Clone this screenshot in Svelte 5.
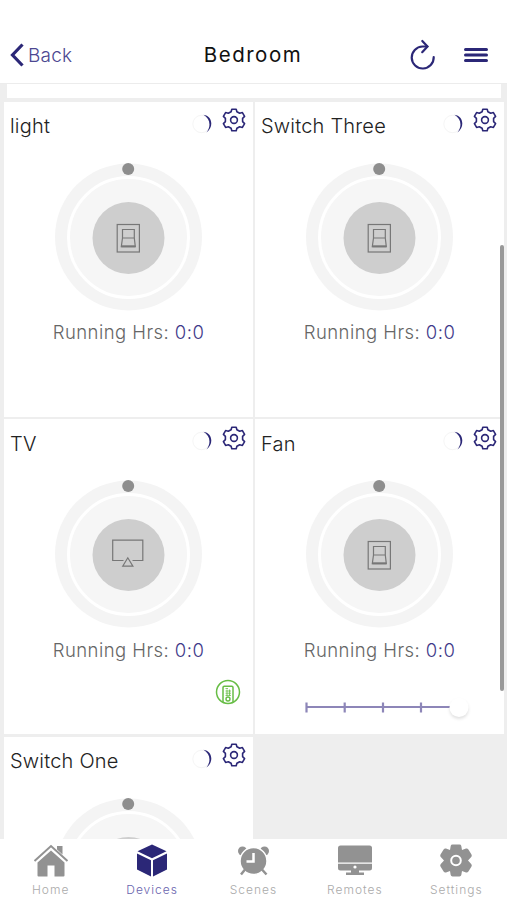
<script>
  let devices = $state([
    { name: 'light', type: 'switch', hours: '0:0' },
    { name: 'Switch Three', type: 'switch', hours: '0:0' },
    { name: 'TV', type: 'tv', hours: '0:0', remote: true },
    { name: 'Fan', type: 'switch', hours: '0:0', slider: true },
    { name: 'Switch One', type: 'switch' },
  ]);

  const tabs = ['Home', 'Devices', 'Scenes', 'Remotes', 'Settings'];
  let active = $state('Devices');
</script>

{#snippet gear()}
  <svg class="gear" viewBox="0 0 24 24" width="24" height="24">
    <path
      d="M9.100 3.700L9.800 1.200H14.200L14.900 3.700L17.700 5.300L20.400 4.600L22.600 8.400L20.600 10.400V13.600L22.600 15.600L20.400 19.400L17.700 18.700L14.900 20.300L14.200 22.800H9.800L9.100 20.300L6.300 18.700L3.600 19.400L1.400 15.600L3.400 13.600V10.400L1.400 8.400L3.600 4.600L6.300 5.300Z"
    />
    <circle cx="12" cy="12" r="3.400" />
  </svg>
{/snippet}

{#snippet dial(type)}
  <svg class="dial" viewBox="0.500 0 149 150" width="149" height="150">
    <circle cx="75" cy="75" r="73.500" fill="#f4f4f4" />
    <circle cx="75" cy="75.500" r="60" fill="#f6f6f6" stroke="#fff" stroke-width="3" />
    <circle cx="75" cy="76" r="36" fill="#cecece" />
    <circle cx="74.700" cy="7" r="6" fill="#8e8e8e" />
    {#if type === 'tv'}
      <g fill="none" stroke="#777" stroke-width="1.200">
        <path d="M70 81.500H59.200V61.200H89.300V81.500H79" />
        <path d="M69.200 87.200L74.300 78.800L79.400 87.200Z" />
      </g>
    {:else}
      <g fill="none" stroke="#777" stroke-width="1.200">
        <rect x="63.700" y="62.500" width="22.200" height="27.500" />
        <path d="M69 67.500H80.800V76H69ZM69 76L67.800 84.700H81.800L80.800 76" />
        <path d="M67.800 84.300H81.800" stroke-width="2" />
      </g>
    {/if}
  </svg>
{/snippet}

<div class="screen">
  <header>
    <button class="back">
      <svg viewBox="0 0 16 24" width="16" height="24">
        <path d="M13.500 1.500L3.500 12L13.500 22.500" />
      </svg>
      <span>Back</span>
    </button>
    <h1>Bedroom</h1>
    <div class="actions">
      <svg class="refresh" viewBox="0 0 28 32" width="28" height="32">
        <path d="M24.700 18.100A11 11 0 1 1 13.500 7.500H18.200" />
        <path d="M13.300 2L18.500 7.500L13.200 13.200" />
      </svg>
      <svg class="menu" viewBox="0 0 24 16" width="24" height="16">
        <path d="M1.500 2.500H22.500M1.500 8H22.500M1.500 13.500H22.500" />
      </svg>
    </div>
  </header>

  <main>
    <div class="previous"></div>
    <div class="grid">
      {#each devices as device}
        <section class="card">
          <div class="card-head">
            <h2>{device.name}</h2>
            <svg class="moon" viewBox="0 0 20 20" width="20" height="20">
              <circle cx="9.500" cy="10" r="8.700" fill="none" stroke="#f5f5f5" />
              <path d="M11.500 .8C20.500 2 22 13 14.500 18.500C19.500 12 18 4.500 11.500 .8Z" fill="#2b2777" />
            </svg>
            {@render gear()}
          </div>
          {@render dial(device.type)}
          {#if device.hours}
            <p class="hours">Running Hrs: <span>{device.hours}</span></p>
          {/if}
          {#if device.remote}
            <svg class="remote" viewBox="0 0 26 26" width="26" height="26">
              <circle cx="13" cy="13" r="11.500" stroke-width="1.500" />
              <path d="M8 23V8.500Q8 7.300 9.200 7.300H16.800Q18 7.300 18 8.500V23" stroke-width="1.500" />
              <path d="M10.500 9.500H13M10.500 12H16M10.500 14.200H16M10.500 16.400H16M12 10.500V17M14.500 10.500V17" stroke-width=".8" />
              <circle cx="13" cy="20" r="2" stroke-width="1.400" />
            </svg>
          {/if}
          {#if device.slider}
            <svg class="slider" viewBox="0 0 170 28" width="170" height="28">
              <path d="M2 12H148" />
              <path d="M2.500 7.500V17.500M40.700 7.500V17.500M79 7.500V17.500M117 7.500V17.500" />
              <circle class="knob" cx="155" cy="12.500" r="9.500" />
            </svg>
          {/if}
        </section>
      {/each}
    </div>
    <div class="scrollbar"></div>
  </main>

  <nav>
    {#each tabs as tab}
      <button class="tab" class:active={tab === active} onclick={() => (active = tab)}>
        <svg viewBox="0 0 36 34" width="36" height="34">
          {#if tab === 'Home'}
            <path d="M4.500 18.500L18 6.500L31.500 18.500V31.500Q31.500 32.500 30.500 32.500H21.500V21.500H14.500V32.500H5.500Q4.500 32.500 4.500 31.500Z" />
            <path d="M1.500 17L18 2L34.500 17" fill="none" stroke="currentColor" stroke-width="2" />
            <path d="M24 2H29.500V10.500L24 5.500Z" />
          {:else if tab === 'Devices'}
            <path d="M18 .5L32.500 7.300L18 14.300L3.500 7.300Z" />
            <path d="M3 9.500L17 16.200V32.500L3 25.500Z" />
            <path d="M33 9.500L19 16.200V32.500L33 25.500Z" />
          {:else if tab === 'Scenes'}
            <circle cx="7.500" cy="7" r="4.500" />
            <circle cx="29.500" cy="7" r="4.500" />
            <circle cx="18.500" cy="17" r="13.500" stroke="#fff" stroke-width="1.500" />
            <path d="M10 25.500L6 30.500M27 25.500L31.500 30.500" stroke="currentColor" stroke-width="2.500" />
            <path d="M18.500 9V17.500H11.500" fill="none" stroke="#fff" stroke-width="2.500" />
          {:else if tab === 'Remotes'}
            <path d="M3.500 1.500H32.500Q35 1.500 35 4V18.500H1V4Q1 1.500 3.500 1.500Z" />
            <path d="M1 19.700H35V24Q35 26.500 32.500 26.500H22V28.500H27V31H9V28.500H14V26.500H3.500Q1 26.500 1 24Z" />
            <circle cx="18" cy="23" r="1.600" fill="#fff" />
          {:else}
            <path
              d="M14.500 .6H21.500Q23 .6 23.300 2L24 6L28 4.600Q29.500 4.200 30.400 5.500L33.500 10.500Q34.300 12 33.200 13L30 16.500L33.200 20Q34.300 21 33.500 22.500L30.400 27.500Q29.500 28.800 28 28.400L24 27L23.300 31Q23 32.400 21.500 32.400H14.500Q13 32.400 12.700 31L12 27L8 28.400Q6.500 28.800 5.600 27.500L2.500 22.500Q1.700 21 2.800 20L6 16.500L2.800 13Q1.700 12 2.500 10.500L5.600 5.500Q6.500 4.200 8 4.600L12 6L12.700 2Q13 .6 14.500 .6Z"
            />
            <circle cx="18" cy="16.500" r="4.800" fill="none" stroke="#fff" stroke-width="2" />
          {/if}
        </svg>
        <span>{tab}</span>
      </button>
    {/each}
  </nav>
</div>

<style>
  .screen {
    display: flex;
    flex-direction: column;
    width: 507px;
    height: 900px;
    overflow: hidden;
    background: #fff;
    font-family: Inter, 'Liberation Sans', sans-serif;
    font-weight: 300;
    color: #222;
  }

  button {
    border: 0;
    padding: 0;
    background: none;
    font: inherit;
    color: inherit;
  }

  header {
    flex: none;
    display: grid;
    grid-template-columns: 1fr auto 1fr;
    align-items: center;
    height: 84px;
    padding: 27px 19px 0 9px;
    box-sizing: border-box;
    border-bottom: 1px solid #ececec;
  }

  .back {
    display: flex;
    align-items: center;
    gap: 3px;
    font-size: 19px;
    letter-spacing: 0.2px;
    color: #4c4791;
  }

  .back span {
    padding-top: 1px;
  }

  .back svg {
    fill: none;
    stroke: #2b2777;
    stroke-width: 3.2;
  }

  h1 {
    margin: 0 0 1px 9px;
    font-size: 20.5px;
    font-weight: 400;
    letter-spacing: 1.5px;
    color: #111;
  }

  .actions {
    display: flex;
    justify-content: flex-end;
    align-items: center;
    gap: 27px;
  }

  .actions svg {
    fill: none;
    stroke: #2b2777;
    stroke-width: 2.2;
    stroke-linecap: round;
  }

  .actions .menu {
    stroke-width: 3;
    margin-bottom: 1px;
  }

  main {
    flex: 1;
    min-height: 0;
    position: relative;
    overflow: hidden;
    background: #eee;
  }

  .previous {
    height: 14px;
    margin: 0 6px 3.5px 7px;
    background: #fff;
  }

  .grid {
    display: grid;
    grid-template-columns: 1fr 1fr;
    grid-auto-rows: 315px;
    gap: 2.5px 2px;
    padding: 0 3px 0 4px;
  }

  .card {
    display: flex;
    flex-direction: column;
    align-items: center;
    background: #fff;
  }

  .card-head {
    display: flex;
    align-self: stretch;
    height: 60px;
    padding: 6.6px 7px 0 6px;
    box-sizing: border-box;
  }

  h2 {
    flex: 1;
    margin: 6.2px 0 0;
    font-size: 20px;
    font-weight: 300;
    line-height: 24px;
    letter-spacing: 0.2px;
  }

  .moon {
    margin: 5.9px 10px 0 0;
  }

  .gear {
    fill: none;
    stroke: #2b2777;
    stroke-width: 1.6;
    stroke-linejoin: round;
  }

  .dial {
    flex: none;
  }

  .hours {
    margin: 8.8px 0 0;
    font-size: 18.5px;
    line-height: 24px;
    letter-spacing: 0.45px;
    white-space: nowrap;
    color: #666;
  }

  .hours span {
    color: #3f3a8a;
  }

  .remote {
    align-self: flex-end;
    margin: 17.5px 12px 0 0;
    fill: none;
    stroke: #67bd45;
  }

  .slider {
    align-self: flex-end;
    margin: 33px 30px 0 0;
    fill: none;
    stroke: #8d86b8;
    stroke-width: 2.2;
  }

  .knob {
    fill: #fff;
    stroke: none;
    filter: drop-shadow(0 2px 1.5px rgba(0, 0, 0, 0.12));
  }

  .scrollbar {
    position: absolute;
    top: 161px;
    right: 3px;
    width: 4px;
    height: 446px;
    border-radius: 2px;
    background: #999;
  }

  nav {
    flex: none;
    display: grid;
    grid-template-columns: repeat(5, 1fr);
    height: 61px;
    background: #fff;
  }

  .tab {
    display: flex;
    flex-direction: column;
    align-items: center;
    padding-top: 5px;
    color: #929292;
  }

  .tab svg {
    fill: currentColor;
  }

  .tab span {
    margin-top: 4px;
    font-size: 12px;
    line-height: 15px;
    letter-spacing: 1px;
    color: #aaa;
  }

  .tab.active {
    color: #2b2777;
  }

  .tab.active span {
    color: #6964ae;
  }
</style>
